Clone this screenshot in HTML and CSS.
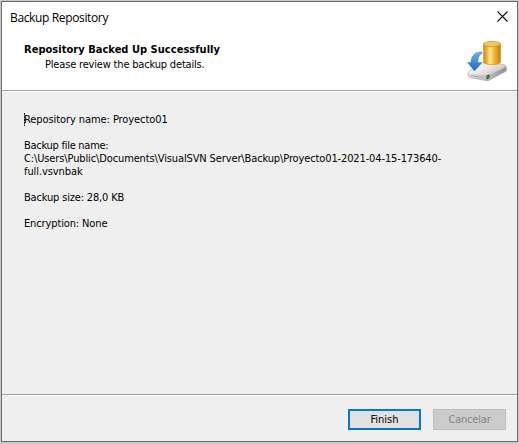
FILE: index.html
```html
<!DOCTYPE html>
<html lang="en">
<head>
<meta charset="utf-8">
<title>Backup Repository</title>
<link rel="stylesheet" href="styles.css">
</head>
<body>
<main class="window">
  <header class="titlebar">
    <span class="title">Backup Repository</span>
    <svg class="close" width="11" height="11" viewBox="0 0 11 11" aria-label="Close"><path d="M.5 .5l10 10M10.500 .5l-10 10" stroke="#111" stroke-width="1.1"/></svg>
  </header>
  <section class="banner">
    <div class="banner-text">
      <h1 class="heading">Repository Backed Up Successfully</h1>
      <p class="subtitle">Please review the backup details.</p>
    </div>
    <svg class="icon" width="42" height="44" viewBox="0 0 42 44">
      <defs>
        <linearGradient id="gold"><stop offset="0" stop-color="#cf8d10"/><stop offset=".2" stop-color="#eeb02c"/><stop offset=".38" stop-color="#ffe9a2"/><stop offset=".65" stop-color="#f3b42c"/><stop offset="1" stop-color="#c98208"/></linearGradient>
        <linearGradient id="top" x2="1" y2=".6"><stop offset="0" stop-color="#b9babd"/><stop offset=".4" stop-color="#f1f1f3"/><stop offset=".7" stop-color="#dcdcdf"/><stop offset="1" stop-color="#b9babd"/></linearGradient>
        <linearGradient id="side"><stop offset="0" stop-color="#e2e2e5"/><stop offset=".45" stop-color="#c2c3c6"/><stop offset="1" stop-color="#8f9094"/></linearGradient>
        <linearGradient id="blue" x2="0" y2="1"><stop offset="0" stop-color="#74b4ea"/><stop offset=".5" stop-color="#3f8ddb"/><stop offset="1" stop-color="#1c66c4"/></linearGradient>
      </defs>
      <path d="M2.300 33L13 25Q14 24 16 24L37 25.500Q40.300 26 40.300 28V32L23.500 41Q22 42 20 41.500L4 38.500Q2 38 2 36Z" fill="url(#side)" stroke="#a2a3a7" stroke-width=".7"/>
      <path d="M2.500 33L13 25Q14 24 16 24L37 25.500Q41 26 39.500 28L24 36Q22 37 20 36.500L4 34.500Q2 34 2.500 33Z" fill="url(#top)"/>
      <path d="M5 36.500L17 38.700" stroke="#a9aaae"/>
      <path d="M20.500 36.800L23.500 35.500V39L20.500 40.500Z" fill="#16461c"/><path d="M21.200 37.500L22.700 37V38.500L21.200 39Z" fill="#37d52d"/>
      <path d="M17.500 5V23C17.500 26.500 34.500 26.500 34.500 23V5Z" fill="url(#gold)" stroke="#cb8c17" stroke-width=".6"/>
      <ellipse cx="26" cy="5" rx="8.500" ry="2.600" fill="#f5c75a" stroke="#cb8c17" stroke-width=".7"/>
      <path d="M16 13C9 12.500 5 17 5 23.500H1.500L8.500 32L16 23.500H12C11.500 19 13 16 16 14.500Z" fill="url(#blue)" stroke="#3c86ca" stroke-width=".5"/>
    </svg>
  </section>
  <section class="details">
    <p class="row"><span class="repo">Repository name: Proyecto01</span></p>
    <p class="row"><span class="label">Backup file name:</span><br><span class="path">C:\Users\Public\Documents\VisualSVN Server\Backup\Proyecto01-2021-04-15-173640-</span><br><span class="tail">full.vsvnbak</span></p>
    <p class="row"><span class="size">Backup size: 28,0 KB</span></p>
    <p class="row"><span class="enc">Encryption: None</span></p>
  </section>
  <footer class="actions">
    <button class="button primary">Finish</button>
    <button class="button cancel" disabled>Cancelar</button>
  </footer>
</main>
</body>
</html>
```
FILE: styles.css
```css
* { box-sizing: border-box; }
body {
  margin: 0;
  width: 519px;
  height: 444px;
  padding: 1px 1px 2px;
  background: #c8c8c8;
  overflow: hidden;
  font: 11px/13px "DejaVu Sans Condensed", "DejaVu Sans", sans-serif;
  color: #000;
}
.window {
  display: flex;
  flex-direction: column;
  width: 517px;
  height: 441px;
  border: 1px solid #6c6c6c;
  background: #efefef;
}
.titlebar {
  display: flex;
  justify-content: space-between;
  height: 30px;
  padding: 9px 9px 0 8px;
  background: #fff;
}
.title { font: 12px/14px "Open Sans", sans-serif; letter-spacing: -.36px; white-space: nowrap; }
.banner {
  display: flex;
  justify-content: space-between;
  height: 59px;
  padding: 7px 9px 0 22px;
  background: #fff;
  border-bottom: 1px solid #a0a0a0;
}
.banner-text { padding-top: 3px; }
h1, p { margin: 0; }
.heading { font-size: 11px; line-height: 15px; font-weight: bold; letter-spacing: .03px; white-space: nowrap; }
.subtitle { padding-left: 21px; line-height: 15px; letter-spacing: -.18px; white-space: nowrap; }
.details {
  height: 304px;
  padding: 21px 22px 0;
  border-top: 1px solid #fff;
  border-bottom: 1px solid #a0a0a0;
}
.row { margin-bottom: 13px; white-space: nowrap; }
.row:first-child::before {
  content: "";
  float: left;
  width: 1px;
  height: 13px;
  margin-right: -1px;
  background: repeating-linear-gradient(#222 0 2px, #999 2px 3px);
}
.repo { letter-spacing: -.08px; }
.label { letter-spacing: -.27px; }
.path { letter-spacing: -.125px; }
.tail { letter-spacing: -.08px; }
.size { letter-spacing: -.17px; }
.enc { letter-spacing: -.13px; }
.actions {
  display: flex;
  justify-content: flex-end;
  gap: 12px;
  flex: 1;
  padding: 13px 11px 0;
  border-top: 1px solid #fff;
}
.button {
  width: 73px;
  height: 21px;
  padding: 0;
  border: 1px solid #bfbfbf;
  background: #ccc;
  color: #838383;
  font: inherit;
}
.primary { border: 2px solid #0078d7; background: #e1e1e1; color: #000; }
.cancel { letter-spacing: -.2px; }
```
